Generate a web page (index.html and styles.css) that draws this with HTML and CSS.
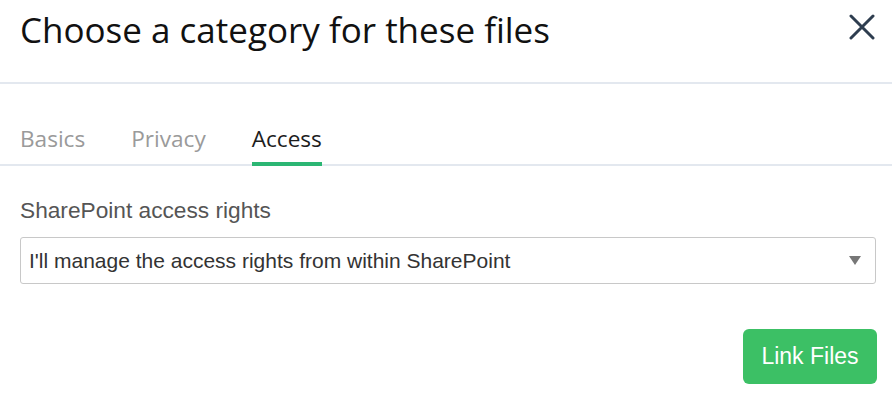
FILE: index.html
```html
<!DOCTYPE html>
<html lang="en">
<head>
<meta charset="utf-8">
<title>Choose a category</title>
<link rel="stylesheet" href="styles.css">
</head>
<body>
<div class="dialog">
  <header class="dialog-header">
    <h1 class="dialog-title">Choose a category for these files</h1>
    <button class="close-btn" aria-label="Close">
      <svg width="26" height="26" viewBox="0 0 26 26"><path d="M2 2 L24 24 M24 2 L2 24" stroke="#2e3d4f" stroke-width="3" stroke-linecap="round" fill="none"/></svg>
    </button>
  </header>
  <nav class="tabs">
    <span class="tab">Basics</span>
    <span class="tab">Privacy</span>
    <span class="tab active">Access</span>
  </nav>
  <section class="form">
    <label class="field-label">SharePoint access rights</label>
    <div class="select">
      <span class="select-value">I'll manage the access rights from within SharePoint</span>
      <svg class="select-arrow" width="12" height="9" viewBox="0 0 12 9"><path d="M0 0 H12 L6 9 Z" fill="#777"/></svg>
    </div>
  </section>
  <footer class="actions">
    <button class="primary-btn">Link Files</button>
  </footer>
</div>
</body>
</html>
```

FILE: styles.css
```css
* { box-sizing: border-box; }
html, body { margin: 0; padding: 0; background: #fff; }
.dialog { width: 892px; height: 401px; display: flex; flex-direction: column; }
.dialog-header {
  height: 84px;
  flex: none;
  border-bottom: 2px solid #e3e8ef;
  display: flex;
  align-items: flex-start;
  justify-content: space-between;
  padding: 0 17px 0 20px;
}
.dialog-title {
  margin: 8px 0 0 0;
  font-family: "Open Sans", sans-serif;
  font-weight: 400;
  font-size: 35px;
  line-height: 44px;
  color: #111;
}
.close-btn {
  margin-top: 14px;
  border: 0;
  background: none;
  padding: 0;
  width: 26px;
  height: 26px;
  display: flex;
}
.tabs {
  margin-top: 40px;
  flex: none;
  display: flex;
  align-items: flex-start;
  gap: 46px;
  padding: 0 20px;
  border-bottom: 2px solid #e3e8ef;
  height: 42px;
}
.tab {
  font-family: "Open Sans", sans-serif;
  font-size: 22.6px;
  line-height: 30px;
  color: #9a9a9a;
  height: 42px;
}
.tab.active {
  color: #1d1d1d;
  border-bottom: 4px solid #2bb673;
}
.form { padding: 0 16px 0 20px; display: flex; flex-direction: column; }
.field-label {
  margin-top: 33px;
  font-family: "Liberation Sans", Arial, sans-serif;
  font-size: 22.7px;
  line-height: 22px;
  color: #555;
}
.select {
  margin-top: 16px;
  height: 47px;
  border: 1px solid #c8c8c8;
  border-radius: 3px;
  display: flex;
  align-items: center;
  justify-content: space-between;
  padding: 0 14px 0 8px;
}
.select-value {
  font-family: "Liberation Sans", Arial, sans-serif;
  font-size: 21px;
  color: #333;
}
.actions { display: flex; justify-content: flex-end; padding: 0 15px 0 0; margin-top: 45px; }
.primary-btn {
  width: 134px;
  height: 55px;
  border: 0;
  border-radius: 6px;
  background: #3cc065;
  color: #fff;
  font-family: "Liberation Sans", Arial, sans-serif;
  font-size: 23px;
}
```
